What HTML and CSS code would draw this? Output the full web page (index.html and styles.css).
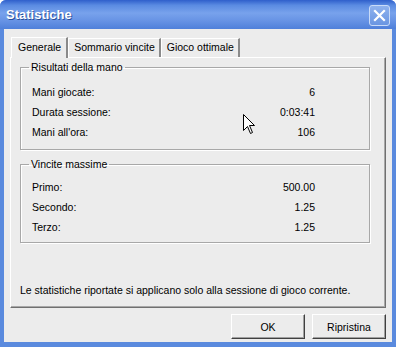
FILE: index.html
```html
<!DOCTYPE html>
<html lang="it">
<head>
    <meta charset="UTF-8">
    <title>Statistiche</title>
    <link rel="stylesheet" href="styles.css">
</head>
<body>
    <div class="window">
        <div class="titlebar">
            <span class="title">Statistiche</span>
            <button class="close-btn" aria-label="Chiudi">
                <svg width="13" height="13" viewBox="0 0 13 13">
                    <path d="M2 2 L11 11 M11 2 L2 11" stroke="#fff" stroke-width="2.2" stroke-linecap="square"/>
                </svg>
            </button>
        </div>

        <div class="client">
            <div class="tabs">
                <div class="tab active">Generale</div>
                <div class="tab">Sommario vincite</div>
                <div class="tab">Gioco ottimale</div>
            </div>

            <div class="panel">
                <fieldset class="group first">
                    <legend>Risultati della mano</legend>
                    <div class="row"><span>Mani giocate:</span><span class="val">6</span></div>
                    <div class="row"><span>Durata sessione:</span><span class="val">0:03:41</span></div>
                    <div class="row"><span>Mani all'ora:</span><span class="val">106</span></div>
                </fieldset>

                <fieldset class="group second">
                    <legend>Vincite massime</legend>
                    <div class="row"><span>Primo:</span><span class="val">500.00</span></div>
                    <div class="row"><span>Secondo:</span><span class="val">1.25</span></div>
                    <div class="row"><span>Terzo:</span><span class="val">1.25</span></div>
                </fieldset>

                <p class="note">Le statistiche riportate si applicano solo alla sessione di gioco corrente.</p>
            </div>

            <div class="buttons">
                <button class="btn">OK</button>
                <button class="btn">Ripristina</button>
            </div>
        </div>

        <!-- mouse pointer as seen in the screenshot -->
        <svg class="cursor" width="13" height="21" viewBox="0 0 13 21">
            <path d="M0.5 0.5 L0.5 16.5 L4.5 12.5 L7.5 19.5 L9.5 18.5 L6.5 11.5 L11.5 11.5 Z" fill="#fff" stroke="#000" stroke-width="1"/>
        </svg>
    </div>
</body>
</html>
```

FILE: styles.css
```css
* {
    margin: 0;
    padding: 0;
    box-sizing: border-box;
}

body {
    font-family: "Liberation Sans", Arial, sans-serif;
    font-size: 10.5px;
    color: #000;
    background-color: #fff;
}

.window {
    position: relative;
    width: 396px;
    height: 347px;
    background-color: #5a8ade;
    border-radius: 6px 6px 0 0;
    display: flex;
    flex-direction: column;
    overflow: hidden;
}

.titlebar {
    height: 29px;
    flex-shrink: 0;
    display: flex;
    align-items: center;
    justify-content: space-between;
    padding: 0 6px 0 6px;
    background: linear-gradient(to bottom, #2f5fcb 0%, #5a8be2 18%, #78a2ec 45%, #6894e5 70%, #4f80da 100%);
}

.title {
    color: #fff;
    font-weight: bold;
    font-size: 13px;
    text-shadow: 1px 1px 0 #2a4f9a;
}

.close-btn {
    width: 21px;
    height: 21px;
    display: flex;
    align-items: center;
    justify-content: center;
    background: linear-gradient(to bottom, #8fb2ee, #6a96e2);
    border: 1px solid #c9dbf8;
    border-radius: 3px;
    margin-top: 2px;
}

.client {
    flex: 1;
    margin: 0 4px 5px 4px;
    background-color: #ececec;
    padding: 7px 6px 0 6px;
    display: flex;
    flex-direction: column;
}

.tabs {
    display: flex;
    height: 21px;
    align-items: flex-end;
    padding-left: 1px;
}

.tab {
    height: 19px;
    line-height: 17px;
    padding: 0 4px 0 5px;
    border-top: 1px solid #fff;
    border-left: 1px solid #fff;
    border-right: 2px solid #8a8a8a;
    background-color: #ececec;
}

.tab.active {
    height: 21px;
    line-height: 19px;
    margin-bottom: -1px;
    padding: 0 5px 0 6px;
    position: relative;
    z-index: 1;
}

.panel {
    height: 251px;
    border-top: 1px solid #fff;
    border-left: 1px solid #fff;
    border-right: 1px solid #707070;
    border-bottom: 1px solid #707070;
    box-shadow: inset -1px -1px 0 #a8a8a8;
    padding: 3px 15px 0 9px;
    display: flex;
    flex-direction: column;
}

.group {
    border: 1px solid #a8a8a8;
    box-shadow: 1px 1px 0 #fff, inset 1px 1px 0 #fff;
    padding: 8px 0 7px 0;
}

.group.second {
    margin-top: 8px;
    padding: 6px 0 5px 0;
}

.group legend {
    margin-left: 8px;
    padding: 0 2px;
    line-height: 13px;
}

.row {
    height: 20px;
    display: flex;
    align-items: center;
    justify-content: space-between;
    padding: 0 54px 0 11px;
}

.note {
    margin-top: auto;
    margin-bottom: 10px;
    padding-left: 0;
    line-height: 13px;
}

.buttons {
    display: flex;
    justify-content: flex-end;
    gap: 7px;
    padding: 6px 0 0 0;
}

.btn {
    width: 74px;
    height: 25px;
    font-family: inherit;
    font-size: 10.5px;
    background-color: #ececec;
    border-top: 1px solid #fff;
    border-left: 1px solid #fff;
    border-right: 1px solid #404040;
    border-bottom: 1px solid #404040;
    box-shadow: inset -1px -1px 0 #a0a0a0;
}

.cursor {
    position: absolute;
    left: 243px;
    top: 114px;
}
```
